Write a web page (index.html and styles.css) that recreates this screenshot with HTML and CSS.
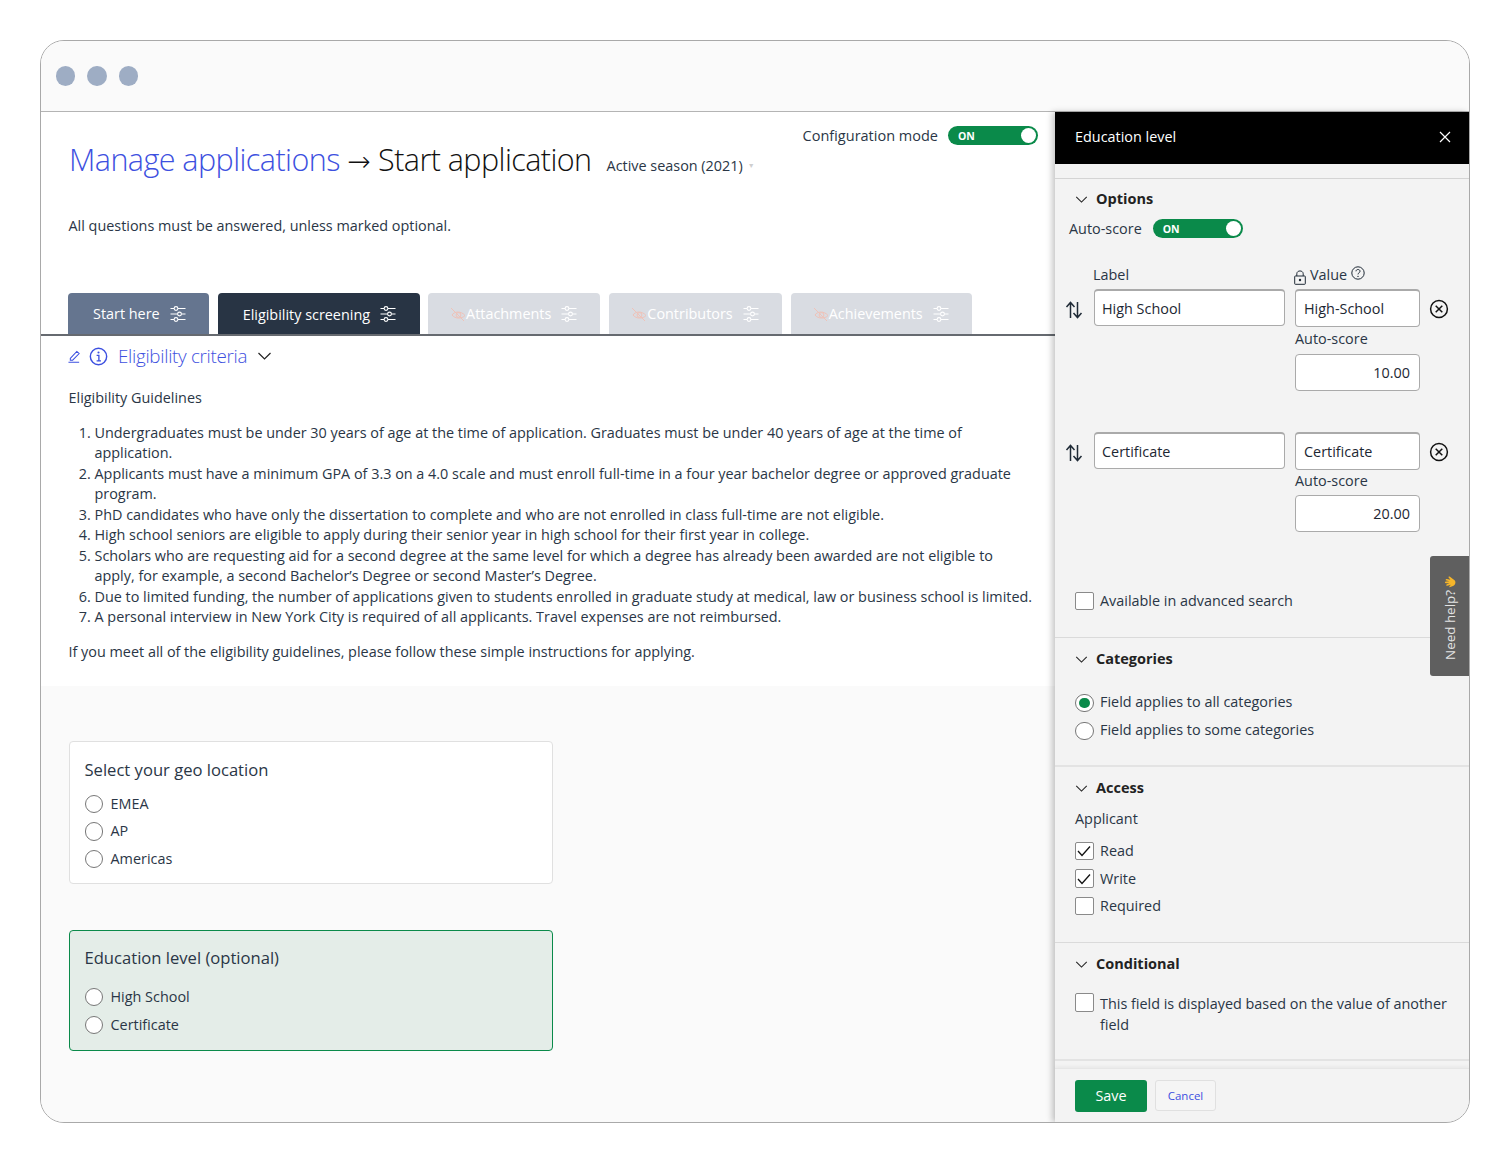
FILE: index.html
```html
<!DOCTYPE html>
<html lang="en">
<head>
<meta charset="utf-8">
<title>Start application</title>
<link rel="stylesheet" href="styles.css">
</head>
<body>
<svg class="sprite" xmlns="http://www.w3.org/2000/svg">
  <symbol id="sliders" viewBox="0 0 16 16"><g fill="none" stroke="currentColor" stroke-width="1.1"><path d="M0.5 2.5H4M8 2.5H15.5M0.5 8H7.5M11.5 8H15.5M0.5 13.5H4M8 13.5H15.5"/><circle cx="6" cy="2.5" r="1.9"/><circle cx="9.5" cy="8" r="1.9"/><circle cx="6" cy="13.5" r="1.9"/></g></symbol>
  <symbol id="eyeoff" viewBox="0 0 16 16"><g fill="none" stroke="currentColor" stroke-width="1"><path d="M2 9C4 5.5 11 4.5 15 9.5C12 13 5 13 2 9Z"/><circle cx="8.5" cy="9" r="2.4"/><path d="M1 2L14 15"/></g></symbol>
  <symbol id="chev" viewBox="0 0 14 8"><path d="M1 1L7 7L13 1" fill="none" stroke="currentColor" stroke-width="1.2"/></symbol>
  <symbol id="sort" viewBox="0 0 18 18"><g fill="none" stroke="#1f2a36" stroke-width="1.5"><path d="M5.5 17V2M1.5 6L5.5 1.5L9.5 6"/><path d="M12.5 1V16M8.5 12L12.5 16.5L16.5 12"/></g></symbol>
  <symbol id="xcircle" viewBox="0 0 20 20"><g fill="none" stroke="#111" stroke-width="1.5"><circle cx="10" cy="10" r="8.4"/><path d="M6.7 6.7L13.3 13.3M13.3 6.7L6.7 13.3"/></g></symbol>
  <symbol id="tick" viewBox="0 0 14 12"><path d="M1 6L5 10.5L13 1.5" fill="none" stroke="#111" stroke-width="1.3"/></symbol>
</svg>

<div class="window">
  <div class="titlebar">
    <span class="dot"></span><span class="dot"></span><span class="dot"></span>
  </div>
  <div class="body">
    <main class="main">
      <div class="top">
        <header class="head">
          <div class="title-row">
            <h1 class="title"><a class="crumb">Manage applications</a> <span class="arrow">→</span> Start application</h1>
            <span class="season">Active season (2021)</span><span class="caret">▼</span>
          </div>
          <div class="config">
            <span>Configuration mode</span>
            <span class="toggle"><b>ON</b><i></i></span>
          </div>
        </header>
        <p class="notice">All questions must be answered, unless marked optional.</p>
        <nav class="tabs">
          <a class="tab tab-done">Start here <svg class="ico"><use href="#sliders"/></svg></a>
          <a class="tab tab-active">Eligibility screening <svg class="ico"><use href="#sliders"/></svg></a>
          <a class="tab tab-off"><svg class="eye"><use href="#eyeoff"/></svg>Attachments <svg class="ico"><use href="#sliders"/></svg></a>
          <a class="tab tab-off"><svg class="eye"><use href="#eyeoff"/></svg>Contributors <svg class="ico"><use href="#sliders"/></svg></a>
          <a class="tab tab-off"><svg class="eye"><use href="#eyeoff"/></svg>Achievements <svg class="ico"><use href="#sliders"/></svg></a>
        </nav>
        <div class="crit">
          <svg class="pencil" viewBox="0 0 14 15"><path d="M2.5 10L9.5 2.5L12 4.8L5 12H2.5ZM0.5 14.2H12" fill="none" stroke="#3d50e0" stroke-width="1.1"/></svg>
          <svg class="info" viewBox="0 0 20 20"><g fill="none" stroke="#3d50e0"><circle cx="10" cy="10" r="8.6" stroke-width="1.5"/><path d="M8 8.8H10.4V14.4M8 14.6H12.6" stroke-width="1.4"/></g><circle cx="10" cy="5.8" r="1.1" fill="#3d50e0"/></svg>
          <span class="crit-name">Eligibility criteria</span>
          <svg class="crit-chev"><use href="#chev"/></svg>
        </div>
        <div class="guide">
          <p class="g-head">Eligibility Guidelines</p>
          <ol class="rules">
            <li>Undergraduates must be under 30 years of age at the time of application. Graduates must be under 40 years of age at the time of application.</li>
            <li>Applicants must have a minimum GPA of 3.3 on a 4.0 scale and must enroll full-time in a four year bachelor degree or approved graduate program.</li>
            <li>PhD candidates who have only the dissertation to complete and who are not enrolled in class full-time are not eligible.</li>
            <li>High school seniors are eligible to apply during their senior year in high school for their first year in college.</li>
            <li>Scholars who are requesting aid for a second degree at the same level for which a degree has already been awarded are not eligible to apply, for example, a second Bachelor’s Degree or second Master’s Degree.</li>
            <li>Due to limited funding, the number of applications given to students enrolled in graduate study at medical, law or business school is limited.</li>
            <li>A personal interview in New York City is required of all applicants. Travel expenses are not reimbursed.</li>
          </ol>
          <p class="g-foot">If you meet all of the eligibility guidelines, please follow these simple instructions for applying.</p>
        </div>
      </div>
      <div class="lower">
        <section class="card">
          <h2 class="q">Select your geo location</h2>
          <div class="opts">
            <label class="opt"><span class="radio"></span>EMEA</label>
            <label class="opt"><span class="radio"></span>AP</label>
            <label class="opt"><span class="radio"></span>Americas</label>
          </div>
        </section>
        <section class="card card-sel">
          <h2 class="q">Education level (optional)</h2>
          <div class="opts opts-sel">
            <label class="opt"><span class="radio"></span>High School</label>
            <label class="opt"><span class="radio"></span>Certificate</label>
          </div>
        </section>
      </div>
    </main>

    <aside class="panel">
      <div class="p-head">
        <span>Education level</span>
        <svg class="close" viewBox="0 0 12 12"><path d="M1 1L11 11M11 1L1 11" stroke="#fff" stroke-width="1.2"/></svg>
      </div>
      <div class="p-strip"></div>
      <section class="sec sec-options">
        <h3 class="sec-h"><svg class="chev"><use href="#chev"/></svg>Options</h3>
        <div class="auto">
          <span>Auto-score</span>
          <span class="toggle"><b>ON</b><i></i></span>
        </div>
        <div class="field-labels">
          <span class="fl-label">Label</span>
          <span class="fl-value">
            <svg class="lock" viewBox="0 0 12 15"><g fill="none" stroke="#1f2a36"><rect x="0.7" y="6" width="10.6" height="8.3" rx="0.6"/><path d="M2.8 6V3.8C2.8 0 9.2 0 9.2 3.8V6"/></g><circle cx="6" cy="10" r="1.2" fill="#1f2a36"/></svg>Value
            <svg class="help" viewBox="0 0 14 14"><circle cx="7" cy="7" r="6.2" fill="none" stroke="#1f2a36"/><path d="M5 5.3C5 2.9 9 2.9 9 5.3C9 6.8 7 6.7 7 8.4" fill="none" stroke="#1f2a36"/><circle cx="7" cy="10.4" r="0.7" fill="#1f2a36"/></svg>
          </span>
        </div>
        <div class="opt-row">
          <svg class="sort"><use href="#sort"/></svg>
          <div class="input in-label">High School</div>
          <div class="val-col">
            <div class="input in-value">High-School</div>
            <div class="score-l">Auto-score</div>
            <div class="input in-score">10.00</div>
          </div>
          <svg class="xc"><use href="#xcircle"/></svg>
        </div>
        <div class="opt-row opt-row-2">
          <svg class="sort"><use href="#sort"/></svg>
          <div class="input in-label">Certificate</div>
          <div class="val-col">
            <div class="input in-value">Certificate</div>
            <div class="score-l score-tight">Auto-score</div>
            <div class="input in-score in-score-tight">20.00</div>
          </div>
          <svg class="xc"><use href="#xcircle"/></svg>
        </div>
        <label class="check check-adv"><span class="box"></span>Available in advanced search</label>
      </section>
      <section class="sec sec-cat">
        <h3 class="sec-h"><svg class="chev"><use href="#chev"/></svg>Categories</h3>
        <div class="cat-opts">
          <label class="check"><span class="radio radio-on"></span>Field applies to all categories</label>
          <label class="check"><span class="radio"></span>Field applies to some categories</label>
        </div>
      </section>
      <section class="sec sec-acc">
        <h3 class="sec-h"><svg class="chev"><use href="#chev"/></svg>Access</h3>
        <p class="applicant">Applicant</p>
        <div class="acc-opts">
          <label class="check"><span class="box"><svg class="tick"><use href="#tick"/></svg></span>Read</label>
          <label class="check"><span class="box"><svg class="tick"><use href="#tick"/></svg></span>Write</label>
          <label class="check"><span class="box"></span>Required</label>
        </div>
      </section>
      <section class="sec sec-cond">
        <h3 class="sec-h"><svg class="chev"><use href="#chev"/></svg>Conditional</h3>
        <label class="check check-cond"><span class="box"></span><span>This field is displayed based on the value of another field</span></label>
      </section>
      <div class="p-gap"></div>
      <footer class="p-foot">
        <button class="save">Save</button>
        <button class="cancel">Cancel</button>
      </footer>
      <div class="need">
        <span class="need-t">Need help?</span>
        <svg class="hand" viewBox="0 0 14 14"><path d="M2 6.5C1 5 2 4.5 3 5.5L4 6.5L3 3C2.7 1.8 4 1.6 4.4 2.7L5.4 5.2L5.3 1.8C5.3 .6 6.8 .6 6.9 1.8L7.2 5L8 2.2C8.4 1.1 9.7 1.5 9.4 2.7L8.7 6L10.4 4.5C11.4 3.7 12.3 4.7 11.4 5.6L9 8.6C7.6 11.8 3.6 11 2.8 8.4Z" fill="#f5b52a"/></svg>
      </div>
    </aside>
  </div>
</div>
</body>
</html>
```

FILE: styles.css
```css
* { box-sizing: border-box; }
html, body { margin: 0; height: 100%; }
body {
  background: #fff;
  padding: 40px;
  font-family: "Open Sans", "Noto Sans", sans-serif;
  font-size: 14.4px;
  color: #2a3646;
}
.sprite { display: none; }
p, h1, h2, h3 { margin: 0; font-weight: normal; }

.window {
  width: 1430px;
  height: 1083px;
  border: 1px solid #a9a9a9;
  border-radius: 24px;
  overflow: hidden;
  background: #fff;
  display: flex;
  flex-direction: column;
}
.titlebar {
  height: 71px;
  flex: none;
  background: #fafafa;
  border-bottom: 1px solid #b4b4b4;
  display: flex;
  align-items: center;
  gap: 12px;
  padding: 0 0 0 14.5px;
}
.dot { width: 19.5px; height: 20px; border-radius: 50%; background: #9eadc4; }
.body { flex: 1; display: flex; min-height: 0; }

/* main column */
.main { width: 1014px; flex: none; display: flex; flex-direction: column; background: #fafafa; }
.top { background: #fff; height: 574px; flex: none; }
.head { display: flex; justify-content: space-between; align-items: flex-start; padding: 0 17px 0 28px; }
.title-row { display: flex; align-items: baseline; margin-top: 25px; }
.title { font-size: 30.5px; line-height: 44px; font-weight: 300; color: #111; letter-spacing: -0.55px; white-space: nowrap; }
.crumb { color: #3d50e0; }
.arrow { font-family: "DejaVu Sans", sans-serif; font-size: 28px; letter-spacing: 0; }
.season { margin-left: 15px; }
.caret { font-size: 7px; color: #cfcfcf; margin-left: 5px; position: relative; top: -3px; }
.config { display: flex; align-items: center; gap: 10px; margin-top: 14px; font-size: 14.5px; }
.toggle {
  width: 90px; height: 19px; border-radius: 10px; background: #0a8a4a;
  display: inline-flex; align-items: center; justify-content: space-between;
  padding: 0 2px 0 10px; flex: none; letter-spacing: 0;
}
.toggle b { color: #fff; font-size: 10.5px; font-weight: 700; }
.toggle i { width: 15px; height: 15px; border-radius: 50%; background: #fff; display: block; }
.notice { margin: 31px 0 0 27.5px; line-height: 22px; }

.tabs { display: flex; align-items: flex-end; gap: 9px; margin-top: 56px; padding-left: 27px; border-bottom: 2px solid #666a70; height: 43px; }
.tab {
  height: 41px; padding: 0 23px 0 25px; border-radius: 4px 4px 0 0;
  display: flex; align-items: center; gap: 10px; color: #fff; white-space: nowrap;
}
.tab-done { background: #65758f; }
.tab-active { background: #283444; padding: 1px 24px 0 25px; margin-right: -1px; }
.tab-off { background: #d9dce2; padding-left: 22px; position: relative; }
.ico { width: 16px; height: 16px; flex: none; }
.eye { width: 16px; height: 16px; margin-right: -10px; color: #efc2b8; flex: none; }

.crit { display: flex; align-items: center; margin: 7px 0 0 27px; height: 26px; }
.pencil { width: 13px; height: 14px; margin-right: 8px; }
.info { width: 19px; height: 19px; margin-right: 10px; }
.crit-name { font-size: 18.8px; font-weight: 300; color: #3d50e0; letter-spacing: -0.3px; }
.crit-chev { width: 15px; height: 8px; margin-left: 10px; color: #222; }
.guide { margin: 0 20px 0 27.5px; line-height: 20.55px; }
.g-head { margin-top: 19px; }
.rules { margin: 14px 0 0; padding-left: 26px; }
.g-foot { margin-top: 14px; }

.lower { padding: 55px 0 0 27.5px; }
.card { width: 484.5px; height: 143px; background: #fff; border: 1px solid #e0e0e0; border-radius: 4px; padding: 16px 15px 0; }
.card-sel { height: 121px; margin-top: 46px; background: #e4ede8; border-color: #0a8a4a; padding-top: 15px; }
.q { font-size: 16.6px; line-height: 24px; }
.opts { margin-top: 11px; display: flex; flex-direction: column; gap: 7.5px; }
.opts-sel { margin-top: 16px; gap: 8px; }
.opt { display: flex; align-items: center; gap: 7.5px; height: 20px; }
.radio { width: 18.5px; height: 18.5px; border: 1px solid #777; border-radius: 50%; background: #fff; flex: none; position: relative; top: 1px; }
.radio-on::after { content: ""; position: absolute; inset: 3px; border-radius: 50%; background: #0a8a4a; }

/* side panel */
.panel { flex: 1; position: relative; background: #f3f3f3; box-shadow: -3px 0 6px rgba(0,0,0,.22); display: flex; flex-direction: column; min-width: 0; }
.p-head { height: 52px; background: #000; color: #fff; display: flex; align-items: center; justify-content: space-between; padding: 0 18px 3px 20px; flex: none; }
.close { width: 12px; height: 12px; }
.p-strip { height: 15px; border-bottom: 1px solid #d4d4d4; flex: none; }
.sec { padding: 0 20px; flex: none; border-bottom: 1px solid #dadada; }
.sec-h { display: flex; align-items: center; gap: 8px; font-weight: 700; font-size: 14.5px; color: #222; line-height: 20px; }
.chev { width: 13px; height: 7px; }
.sec-options { height: 459px; padding-top: 10px; }
.auto { display: flex; align-items: center; gap: 11px; margin: 10px 0 0 -6px; }
.field-labels { display: flex; margin: 27px 0 0 18px; line-height: 20px; }
.fl-label { width: 202px; }
.fl-value { display: flex; align-items: center; gap: 4px; margin-left: -1px; }
.lock { width: 12px; height: 15px; position: relative; top: 2px; }
.help { width: 14px; height: 14px; position: relative; top: -2px; }
.opt-row { display: flex; align-items: flex-start; margin: 4px 0 0 -10px; }
.opt-row-2 { margin-top: 41px; }
.sort { width: 18px; height: 18px; margin: 12px 11px 0 0; flex: none; }
.input { background: #fff; border: 1px solid #aaa; border-radius: 4px; display: flex; align-items: center; padding: 0 8px; color: #1d2733; }
.in-label { width: 191px; height: 37px; flex: none; border-top-width: 2px; padding-left: 7px; }
.val-col { width: 125px; margin-left: 10px; flex: none; }
.in-value { height: 38px; border-top-width: 2px; }
.score-l { line-height: 20px; margin-top: 2px; }
.score-tight { margin-top: 1px; }
.in-score { height: 37px; margin-top: 5px; justify-content: flex-end; padding-right: 9px; }
.in-score-tight { margin-top: 4px; }
.xc { width: 20px; height: 20px; margin: 10px 0 0 9px; flex: none; }
.check { display: flex; align-items: center; gap: 6.5px; line-height: 20px; }
.box { width: 18.5px; height: 18.5px; border: 1px solid #8a8a8a; border-radius: 2px; background: #fff; flex: none; display: flex; align-items: center; justify-content: center; }
.tick { width: 14px; height: 12px; }
.check-adv { margin-top: 59px; }
.sec-cat { height: 129px; padding-top: 11px; border-bottom-width: 2px; border-bottom-color: #e3e3e3; }
.cat-opts { margin-top: 23px; display: flex; flex-direction: column; gap: 8px; }
.sec-acc { height: 176px; padding-top: 11px; }
.applicant { margin-top: 10px; line-height: 22px; }
.acc-opts { margin-top: 11px; display: flex; flex-direction: column; gap: 7.5px; }
.sec-cond { height: 118px; padding: 11px 15px 0 20px; border-bottom-width: 2px; border-bottom-color: #e3e3e3; }
.check-cond { margin-top: 19px; align-items: flex-start; line-height: 21px; }
.check-cond span:last-child { flex: 1; }
.p-gap { height: 7px; flex: none; }
.p-foot { flex: 1; display: flex; align-items: flex-start; gap: 8px; padding: 11px 20px 0; border-top: 1px solid #e6e6e6; box-shadow: 0 -2px 3px rgba(0,0,0,.04); }
.save { width: 72px; height: 32px; background: #0a8a4a; color: #fff; border: 0; border-radius: 3px; padding: 0 0 2px; font: 14.4px "Open Sans", sans-serif; }
.cancel { width: 61px; height: 31px; background: #f5f5f5; color: #3d50e0; border: 1px solid #e0e0e0; border-radius: 3px; font: 11.5px "Open Sans", sans-serif; }
.need { position: absolute; right: 0; top: 444px; width: 39px; height: 120px; background: #5f5f5f; border-radius: 3px 0 0 3px; display: flex; flex-direction: column-reverse; align-items: center; justify-content: flex-start; padding-bottom: 16px; gap: 1px; }
.need-t { writing-mode: vertical-rl; transform: rotate(180deg); color: #e4e4e4; font-size: 13.4px; line-height: 20px; }
.hand { width: 15px; height: 15px; margin-left: 4px; transform: rotate(-90deg); }
```
